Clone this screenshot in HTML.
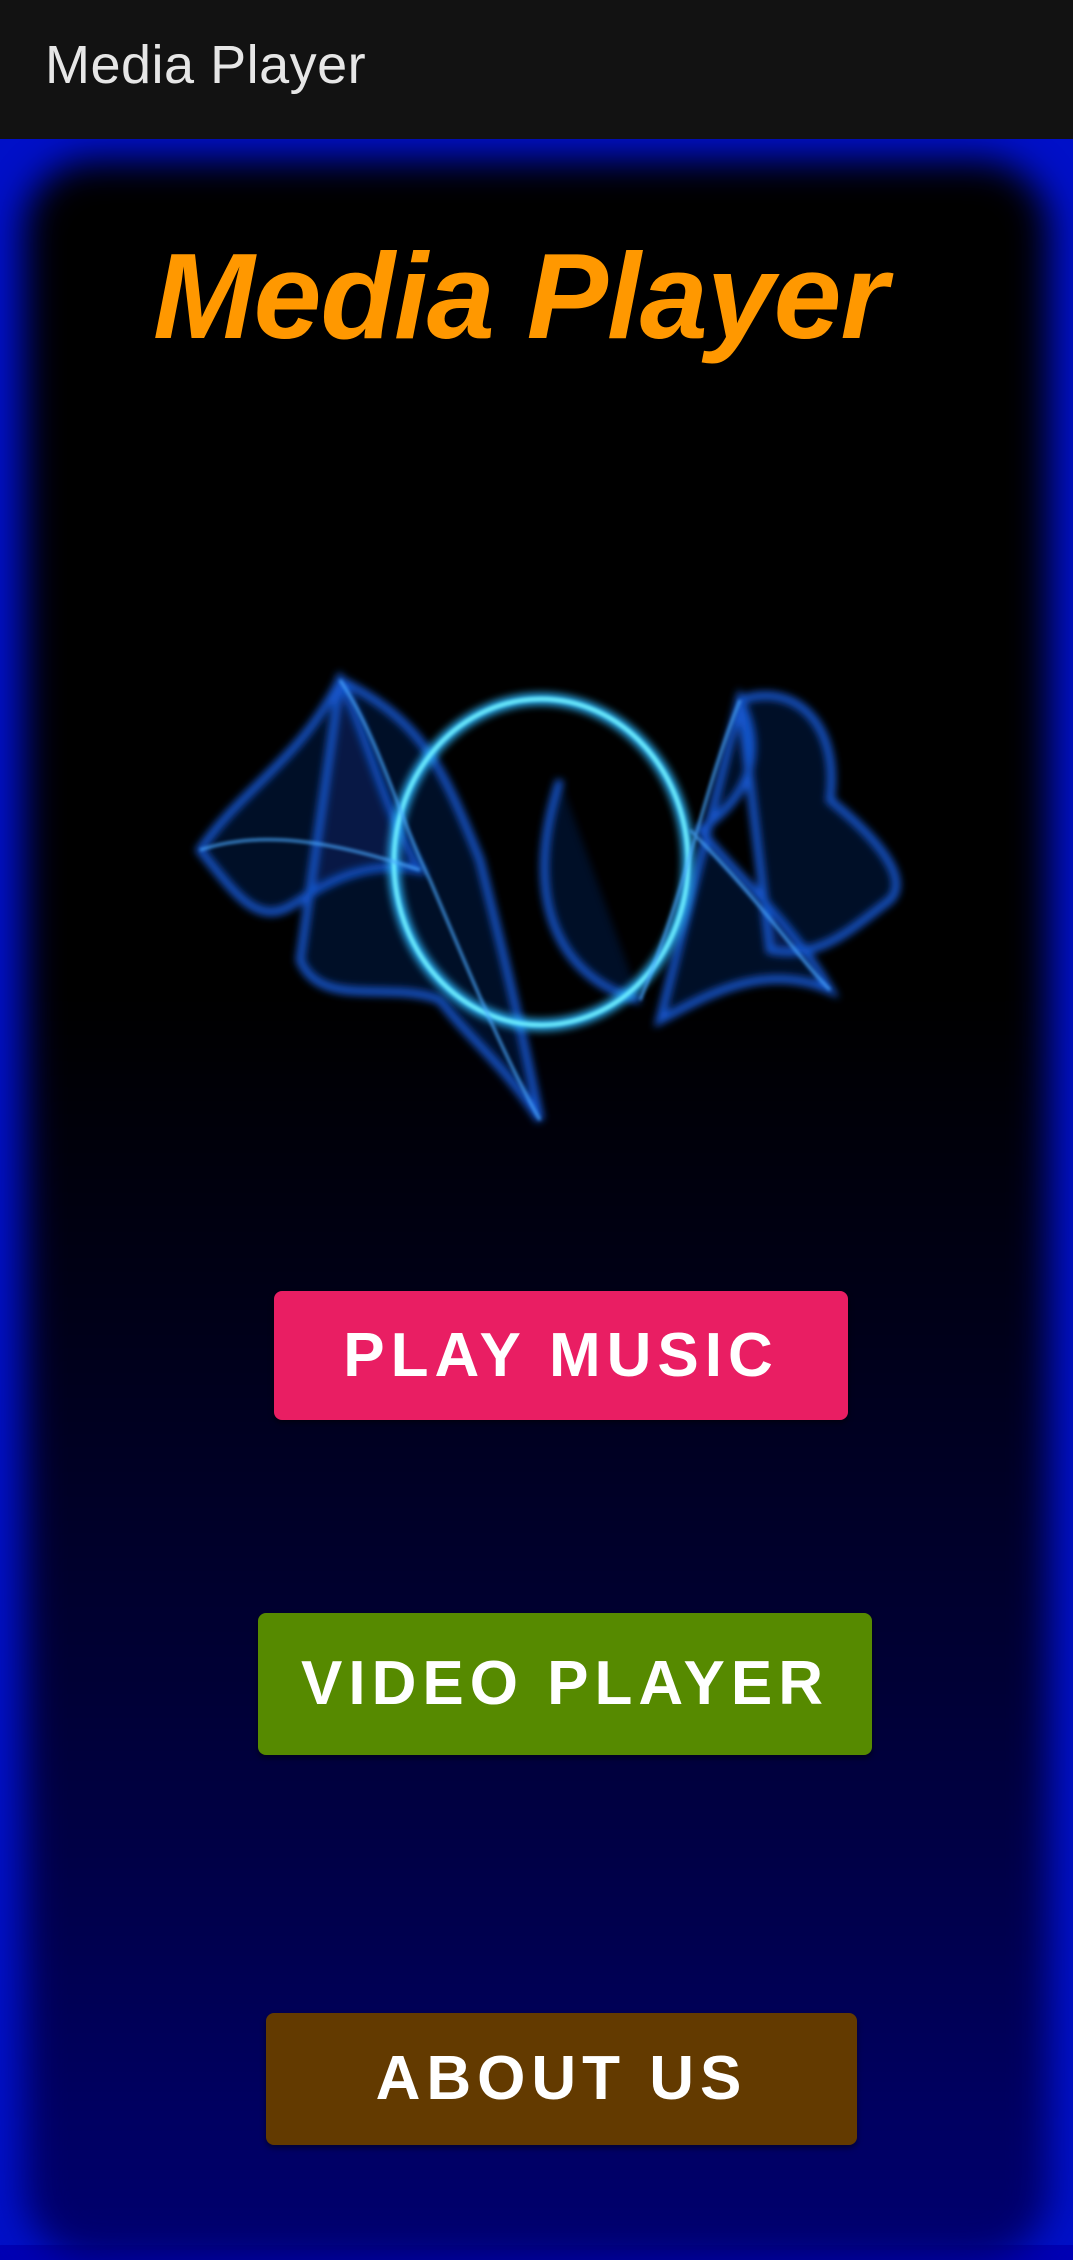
<!DOCTYPE html>
<html><head><meta charset="utf-8"><style>
*{margin:0;padding:0;box-sizing:border-box}
body{width:1073px;height:2245px;overflow:hidden;background:#0000b4;font-family:"Liberation Sans",sans-serif;position:relative}
.bar{position:absolute;left:0;top:0;width:1073px;height:139px;background:#121212;z-index:3}
.bar span{position:absolute;left:45px;top:34px;font-size:54px;color:#e6e6e6;letter-spacing:0.5px}
.bg{position:absolute;left:0;top:139px;width:1073px;height:2106px;background:#0010c8}
.inner{position:absolute;left:24px;top:160px;width:1025px;height:2100px;border-radius:70px;background:linear-gradient(#000 0%,#000 40%,#000018 55%,#00003a 75%,#000070 100%);filter:blur(18px)}
.title{position:absolute;left:153px;top:226px;font-size:122px;font-weight:bold;font-style:italic;color:#ff9800;white-space:nowrap;letter-spacing:-1px;z-index:2}
.btn{position:absolute;color:#fff;font-weight:bold;text-align:center;border-radius:8px;letter-spacing:6px;z-index:2;box-shadow:0 3px 6px rgba(0,0,0,.5)}
svg{position:absolute;left:0;top:0;z-index:1}
</style></head><body>
<div class="bar"><span>Media Player</span></div>
<div class="bg"></div>
<div class="inner"></div>
<div class="title">Media Player</div>
<svg width="1073" height="2245">
<defs><filter id="g"><feGaussianBlur stdDeviation="4"/></filter><filter id="g2"><feGaussianBlur stdDeviation="1.5"/></filter></defs>
<g fill="#1450e0" fill-opacity="0.22" stroke="#1a6cff" stroke-width="8" opacity="0.8" filter="url(#g)">
<path d="M200 850 C240 790 300 760 340 680 C370 740 380 800 420 870 C370 860 330 880 300 900 C260 930 240 900 200 850Z"/>
<path d="M340 680 C420 720 440 760 480 860 C500 940 520 1020 540 1120 C500 1060 470 1040 440 1000 C390 980 320 1010 300 960Z"/>
<path d="M740 700 C760 740 760 790 700 830 C740 880 790 920 830 990 C760 960 700 1000 660 1020Z"/>
<path d="M740 700 C800 680 840 730 830 800 C880 840 910 880 890 900 C850 930 820 960 770 950Z"/>
<path d="M560 780 C520 900 560 980 640 1000"/>
</g>
<ellipse cx="541" cy="862" rx="147" ry="163" fill="none" stroke="#2fb8ff" stroke-width="12" opacity="0.9" filter="url(#g)"/>
<ellipse cx="541" cy="862" rx="147" ry="163" fill="none" stroke="#6ff0ff" stroke-width="4" filter="url(#g2)"/>
<g fill="none" stroke="#4aa8ff" stroke-width="3" opacity="0.8" filter="url(#g2)">
<path d="M340 680 C380 740 400 820 430 880 C460 950 500 1050 540 1120"/>
<path d="M740 700 C700 800 690 880 640 1000"/>
<path d="M200 850 C260 830 330 840 420 870"/>
<path d="M690 830 C760 900 800 960 830 990"/>
</g>
</svg>
<div class="btn" style="left:274px;top:1291px;width:574px;height:129px;background:#e91e63;font-size:62px;line-height:129px">PLAY MUSIC</div>
<div class="btn" style="left:258px;top:1613px;width:614px;height:142px;background:#568a00;font-size:62px;line-height:142px">VIDEO PLAYER</div>
<div class="btn" style="left:266px;top:2013px;width:591px;height:132px;background:#633a00;font-size:62px;line-height:132px">ABOUT US</div>
</body></html>
